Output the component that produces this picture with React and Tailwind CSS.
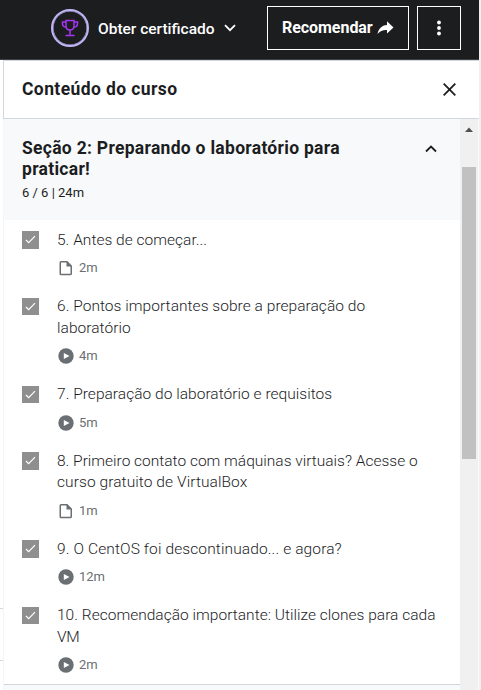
const lessons = [
  { lines: [['5. Antes de começar...', 'tracking-[0.02px]']], kind: 'doc', time: '2m' },
  { lines: [['6. Pontos importantes sobre a preparação do', 'tracking-[0.04px]'], ['laboratório', 'tracking-[0.05px]']], kind: 'video', time: '4m' },
  { lines: [['7. Preparação do laboratório e requisitos', 'tracking-[0.03px]']], kind: 'video', time: '5m' },
  { lines: [['8. Primeiro contato com máquinas virtuais? Acesse o', 'tracking-[0px]'], ['curso gratuito de VirtualBox', 'tracking-[0.08px]']], kind: 'doc', time: '1m' },
  { lines: [['9. O CentOS foi descontinuado... e agora?', 'tracking-[0.12px]']], kind: 'video', time: '12m' },
  { lines: [['10. Recomendação importante: Utilize clones para cada', 'tracking-[0.02px]'], ['VM', 'tracking-[-0.3px]']], kind: 'video', time: '2m' },
];

function Trophy() {
  return (
    <svg width="18" height="18" viewBox="0 0 18 18" fill="none" stroke="#a435f0" strokeWidth="1.5">
      <path d="M5 1.5h8v5.2c0 2.6-1.7 4.3-4 4.3S5 9.300 5 6.700z" />
      <path d="M5 3H1.500v1.700c0 1.900 1.400 3.300 3.700 3.300M13 3h3.500v1.700c0 1.900-1.400 3.300-3.700 3.300M9 11v5M4.500 16.500h9" />
    </svg>
  );
}

function DocIcon() {
  return (
    <svg width="16" height="16" viewBox="0 0 16 16" className="shrink-0">
      <path d="M3 1.750H9l4.250 4.250v7.750a.75.75 0 0 1-.75.75H3a.75.75 0 0 1-.75-.75V2.500A.75.75 0 0 1 3 1.750z" fill="none" stroke="#6a6f73" strokeWidth="1.500" />
      <path d="M8.500 1.200v5.300h5.300z" fill="#6a6f73" />
    </svg>
  );
}

function PlayIcon() {
  return (
    <svg width="16" height="16" viewBox="0 0 16 16" className="shrink-0">
      <circle cx="8" cy="8" r="7.700" fill="#6a6f73" />
      <path d="M5.800 5.100v5.800L11.500 8z" fill="#fff" />
    </svg>
  );
}

function Lesson({ lines, kind, time }) {
  return (
    <li className="flex pl-[18px] pt-[9.500px] pb-[9.500px]">
      <span className="mt-[1.500px] flex h-[17.500px] w-[17px] shrink-0 items-center justify-center bg-[#8f8f8f]">
        <svg width="11" height="9" viewBox="0 0 11 9" fill="none" stroke="#fff" strokeWidth="1.200">
          <path d="M1 5l2.700 2.700L10 1.200" />
        </svg>
      </span>
      <div className="ml-[18px]">
        <div className="text-[15.500px] font-[350] leading-[21.500px] text-[#1c1d1f]">
          {lines.map(([text, tracking]) => (
            <div key={text} className="whitespace-nowrap"><span className={tracking}>{text}</span></div>
          ))}
        </div>
        <div className="mt-[8px] flex h-[18px] items-center gap-[5px] pl-px text-[13px] text-[#6a6f73]">
          {kind === 'doc' ? <DocIcon /> : <PlayIcon />}
          <span>{time}</span>
        </div>
      </div>
    </li>
  );
}

export default function App() {
  return (
    <div className="flex h-[690px] w-[481px] overflow-hidden bg-[#f0f0f0] font-['Roboto',sans-serif]">
      <div className="flex w-[479px] flex-col bg-white">
        <header className="flex h-[60px] shrink-0 items-center border-b border-[#3e4143] bg-[#1c1d1f] pb-[3px] pl-[51px] text-white">
          <span className="flex size-[38px] items-center justify-center rounded-full border-2 border-[#c0b4f5] shadow-[inset_0_0_0_0.5px_#c0b4f5]"><Trophy /></span>
          <span className="ml-[9px] w-[117px] whitespace-nowrap pt-[3px] text-[15.500px] font-medium">Obter certificado</span>
          <svg width="12" height="8" viewBox="0 0 12 8" fill="none" stroke="#fff" strokeWidth="1.800" className="ml-[9px]"><path d="M1 1.200l5 5 5-5" /></svg>
          <button className="ml-[31px] flex h-[44px] w-[142px] items-center border border-white pl-[14px] text-[16px] font-bold">
            <span className="w-[91px] whitespace-nowrap text-left tracking-[-0.05px]">Recomendar</span>
            <svg width="17" height="14" viewBox="0 0 17 14" fill="#fff" className="ml-[4px]"><path d="M10 0.300L16.500 6.500 10 12.500V9C6 8.800 3 10 .5 13 1.500 8 4.500 4.300 10 4z" /></svg>
          </button>
          <button className="ml-[8px] flex h-[44px] w-[44px] items-center justify-center border border-white">
            <svg width="4" height="16" viewBox="0 0 4 16" fill="#fff"><circle cx="2" cy="2.500" r="1.900" /><circle cx="2" cy="8" r="1.900" /><circle cx="2" cy="13.500" r="1.900" /></svg>
          </button>
        </header>
        <div className="flex min-h-0 flex-1">
          <div className="flex w-[3px] shrink-0 flex-col pt-[548px]">
            <div className="h-[53px] border-y border-[#d1d7dc]" />
          </div>
          <aside className="flex min-w-0 flex-1 flex-col">
            <div className="flex h-[59px] shrink-0 items-center justify-between border-y border-l border-[#d1d7dc] pl-[18px] pr-[23px]">
              <h2 className="whitespace-nowrap text-[17.500px] font-bold tracking-[0.4px] text-[#1c1d1f]">Conteúdo do curso</h2>
              <svg width="13" height="13" viewBox="0 0 13 13" fill="none" stroke="#1c1d1f" strokeWidth="1.800"><path d="M.7.7l11.600 11.600M12.300.7L.7 12.300" /></svg>
            </div>
            <div className="flex min-h-0 flex-1">
              <div className="flex w-[457px] flex-col border-l border-[#f4f5f6]">
                <div className="flex h-[101px] shrink-0 bg-[#f7f9fa] pl-[18px] pt-[18px]">
                  <div className="w-[403px] text-[#1c1d1f]">
                    <h3 className="pt-[0.500px] whitespace-nowrap text-[17.500px] font-bold leading-[21.500px] tracking-[0.29px]">Seção 2: Preparando o laboratório para<br />praticar!</h3>
                    <p className="mt-[3.500px] text-[13px] leading-[18px]">6 / 6 | 24m</p>
                  </div>
                  <svg width="12" height="8" viewBox="0 0 12 8" fill="none" stroke="#1c1d1f" strokeWidth="1.800" className="mt-[8px]"><path d="M1 6.500l5-5 5 5" /></svg>
                </div>
                <ul className="shrink-0">
                  {lessons.map((lesson) => <Lesson key={lesson.lines[0][0]} {...lesson} />)}
                </ul>
                <div className="h-[7px] shrink-0 border-t border-[#d1d7dc] bg-[#f7f9fa]" />
              </div>
              <div className="flex w-[19px] flex-col border-r border-[#fafafa] bg-[#f0f0f0] pl-[2px]">
                <svg width="14" height="48" viewBox="0 0 14 48" fill="#505050" className="shrink-0"><path d="M3 13L7 8.500 11 13z" /></svg>
                <div className="h-[292px] w-[14px] bg-[#c1c1c1]" />
              </div>
            </div>
          </aside>
        </div>
      </div>
    </div>
  );
}
